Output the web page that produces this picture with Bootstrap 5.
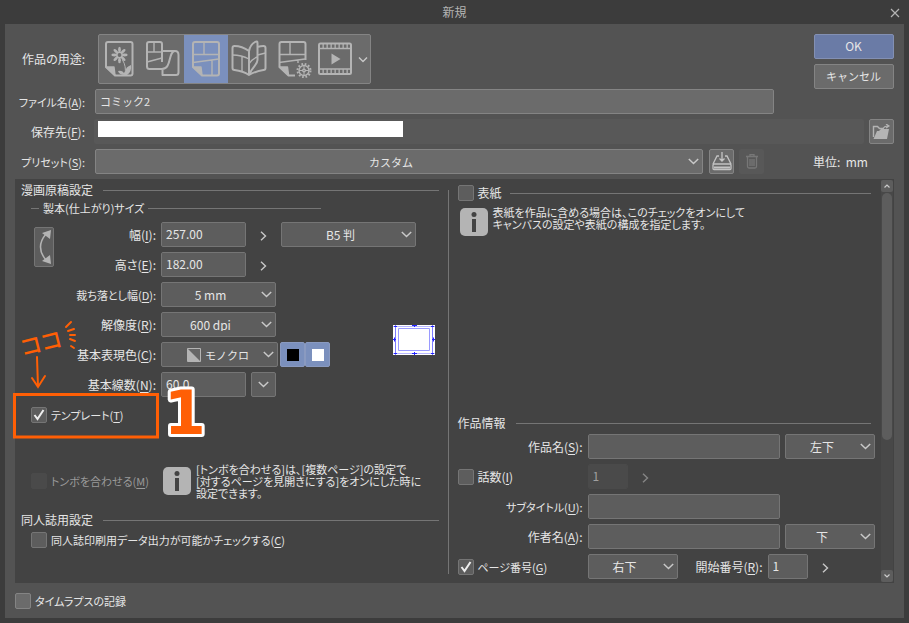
<!DOCTYPE html>
<html lang="ja">
<head>
<meta charset="utf-8">
<meta name="viewport" content="width=device-width, initial-scale=1">
<title>新規</title>
<link href="https://cdn.jsdelivr.net/npm/bootstrap@5.3.0/dist/css/bootstrap.min.css" rel="stylesheet">
<style>
body{background:#3c3c3c;color:#e6e6e6;font-family:"Noto Sans CJK JP",sans-serif;font-size:12px;line-height:12px;font-feature-settings:"palt";min-height:100vh}
u{text-underline-offset:2px}
.titlebar{height:24px;color:#b4b4b4}
.close-btn{width:24px;height:24px;right:2px;color:#c8c8c8}
.dialog{background:#535353;margin:0 5px 5px;padding:10px 10px 9px}
.plain{background:none;border:0;padding:0;color:inherit}
.gap5{gap:5px}.gap6{gap:6px}.gap10{gap:10px}.gap2{gap:2px}
.side{width:80px;margin-left:40px}
.lab{width:70px;white-space:nowrap;flex:none;display:flex;justify-content:flex-end}
.lab-m{width:135px}.lab-s{width:102px}.lab-r{width:125px}.lab-n{width:80px}
.ctl{height:25px;font-size:12px;line-height:12px;border-radius:2px;border:1px solid #757575;background-color:#5d5d5d;color:#e6e6e6;min-height:0;padding:0 5px 2px 4px}
.kana,.ctl.kana{font-size:11px}
.ctl:focus{background-color:#5d5d5d;color:#fff}
.ctl:disabled{background-color:#4a4a4a;border-color:#4a4a4a;color:#a0a0a0;opacity:1}
.lite .ctl{background-color:#6b6b6b;border-color:#848484}
select.ctl{padding:0 24px 0 8px;text-align-last:center;background-image:url("data:image/svg+xml,%3Csvg xmlns='http://www.w3.org/2000/svg' viewBox='0 0 11 7'%3E%3Cpath d='M.8 1l4.7 4.5L10.2 1' fill='none' stroke='%23c8c8c8' stroke-width='1.5'/%3E%3C/svg%3E");background-size:11px 7px;background-position:right 3px center;background-repeat:no-repeat}
select.mono{padding:0 20px 0 43px;text-align-last:left;background-image:url("data:image/svg+xml,%3Csvg xmlns='http://www.w3.org/2000/svg' viewBox='0 0 11 7'%3E%3Cpath d='M.8 1l4.7 4.5L10.2 1' fill='none' stroke='%23c8c8c8' stroke-width='1.5'/%3E%3C/svg%3E"),url("data:image/svg+xml,%3Csvg xmlns='http://www.w3.org/2000/svg' viewBox='0 0 14 14'%3E%3Cpath d='M.5.5h13v13H.5z' fill='%23666' stroke='%23b4b4b4'/%3E%3Cpath d='M1 1l12 12H1z' fill='%23b4b4b4'/%3E%3C/svg%3E");background-size:11px 7px,14px 14px;background-position:right 3px center,25px center}
.sq{width:25px;padding:0;flex:none;display:flex;align-items:center;justify-content:center}
.lite .ok{background:#6a7ba6;border-color:#8390b3}
.trash{height:25px;background:#585858;border-radius:2px;margin-left:-1px}
.tools{height:50px;background:#6b6b6b;border:1px solid #848484;border-radius:2px;margin-left:3px}
.tools svg{display:block;fill:none;stroke:#b4b4b4;stroke-width:1.4;stroke-linejoin:round}
.tools .on{background:#7b90bd}
.solid{fill:#b4b4b4}
.tools .thick{stroke-width:2}
.path-box{background:#585858;border-radius:2px;height:25px;padding:2px 4px}
.path-box input{width:305px;height:16px;background:#fff;border:0;display:block}
.unit{width:81px;margin-left:43px}
.sheet{background:#434343;padding:0 1px 0 6px;margin-top:5px}
.half{flex:1 1 0;min-width:0}
.split{width:1px;background:#757575;margin:11px 9px 9px}
.head{height:22px;gap:10px;white-space:nowrap}
.rule{height:1px;background:#757575;flex:1}
.rule-s{width:8px;height:1px;background:#757575}
.sub{height:14px;padding-left:10px;margin-bottom:7px;width:300px}
.rows{display:flex;flex-direction:column;gap:5px}
.w40{width:40px}.w85{width:85px}.w90{width:90px}.w115{width:115px}.w117{width:117px}.w135{width:135px}
.step{width:25px;height:25px;flex:none}
.step:disabled{opacity:.5}
.swap{width:20px;height:40px;margin:5px 0 0 13px}
.swatch{width:25px;height:25px;border:1px solid #8a9ac0;background:#7b90bd;border-radius:2px;padding:5px}
.swatch span{display:block;width:12px;height:12px;margin:auto}
.chk{appearance:none;width:16px;height:16px;border:1px solid #757575;border-radius:2px;background:#5d5d5d center/14px no-repeat;margin:0;flex:none}
.chk:checked{background-image:url("data:image/svg+xml,%3Csvg xmlns='http://www.w3.org/2000/svg' viewBox='0 0 14 14'%3E%3Cpath d='M2.5 7l3 4L11.5 2' fill='none' stroke='%23eee' stroke-width='2'/%3E%3C/svg%3E")}
.chk:disabled{background-color:#4a4a4a;border-color:#4a4a4a}
.lite .chk{background-color:#6b6b6b;border-color:#848484}
.line{display:flex;align-items:center;gap:4px;white-space:nowrap}
.tmpl{height:25px;padding-left:10px;margin-top:5px}
.tombo{height:36px;padding-left:10px;margin-top:36px;gap:5px}
.tombo .line{width:127px;flex:none;color:#9a9a9a}
.doujin{margin-top:10px}
.check-row{height:18px;padding-left:10px}
.cover{height:28px}
.tip{height:28px;margin-top:1px;padding-left:2px;gap:5px}
.info{margin-top:176px}
.memo{left:-8px;top:-87px;pointer-events:none;overflow:visible}
.scroll{width:12px;margin:1px 0 1px 6px;background:#484848}
.scroll button{width:12px;height:12px;background:#5d5d5d;border-radius:2px;line-height:0}
.thumb{width:10px;height:247px;background:#5d5d5d;border-radius:5px;margin:1px auto 0}
.foot{padding-top:10px}
</style>
<script src="https://cdn.jsdelivr.net/npm/bootstrap@5.3.0/dist/js/bootstrap.bundle.min.js"></script>
</head>
<body class="d-flex flex-column">
<header class="titlebar d-flex align-items-center justify-content-center position-relative">
  <span>新規</span>
  <button class="plain close-btn position-absolute" aria-label="閉じる"><svg width="10" height="10" viewBox="0 0 10 10" stroke="currentColor" stroke-width="1.2"><path d="M1 1l8 8M9 1L1 9"/></svg></button>
</header>
<main class="dialog flex-grow-1 d-flex flex-column">
  <section class="lite rows">
    <div class="d-flex">
      <div class="flex-grow-1 rows">
        <div class="d-flex align-items-center gap10">
          <span class="lab">作品の用途:</span>
          <div class="tools d-flex" role="group" aria-label="作品の用途">
            <button class="plain" aria-label="イラスト"><svg width="42" height="48" viewBox="0 0 42 48"><path class="thick" d="M9 7h22.500q2 0 2 2v29.500q0 2-2 2H16L7 32V9q0-2 2-2z"/><path class="solid" d="M7 32h8l1 8z"/><g fill="#b4b4b4" stroke="none"><g id="pt"><ellipse cx="20.500" cy="14.800" rx="1.400" ry="3"/><ellipse cx="20.500" cy="25.200" rx="1.400" ry="3"/></g><use href="#pt" transform="rotate(45 20.500 20)"/><use href="#pt" transform="rotate(90 20.500 20)"/><use href="#pt" transform="rotate(135 20.500 20)"/><path d="M26 40q-6 0-7-4 4-1 6 2l1.500-2q0-4 5.500-6 1 7-4 10z"/></g><circle cx="20.500" cy="20" r="2.600"/><path d="M23.500 25q4 6 2.500 15" stroke-width="1"/></svg></button>
            <button class="plain" aria-label="Webtoon"><svg width="43" height="48" viewBox="0 0 43 48"><path class="thick" d="M21 27V9q0-2-2-2H8Q6 7 6 9v22.500Q6 34 8.500 34H21c10 0 6-18 13-18q3.500 0 3.500 4v17.500q0 2.500-2.500 2.500H21.500V34M21 16h13"/><path d="M13 7v10M6 17h15M6 27l15-4"/></svg></button>
            <button class="plain on" aria-label="コミック" aria-pressed="true"><svg width="44" height="48" viewBox="0 0 44 48"><path class="thick" d="M11 7h22q2 0 2 2v29.500q0 2-2 2H18L9 32V9q0-2 2-2z"/><path class="solid" d="M9 32h8l1 8z"/><path d="M20 7v12M9 19.500h26M9 27.500l26-3.500M28 25V40"/></svg></button>
            <button class="plain" aria-label="同人誌入稿"><svg width="43" height="48" viewBox="0 0 43 48"><path class="thick" d="M21 16Q14 11 6.500 11q-2 0-2 2v20q0 2 2 2Q15 36 21 40 28 36 35.500 35q2 0 2-2V13q0-2-2-2-3 0-6 1M21 40V16q1-6 6-9 2.500-1.500 2.500 1v17c0 5-5 6-8.500 15"/><path d="M4.500 20q9 0 16.500 4M14 21.500V36M29.500 20l8-2M21 29q3-5 8-7"/></svg></button>
            <button class="plain" aria-label="すべての設定"><svg width="43" height="48" viewBox="0 0 43 48"><path class="thick" d="M34.500 25V9q0-2-2-2h-22q-2 0-2 2v23l9 8.500H24"/><path class="solid" d="M8.500 32h8l1 8z"/><path d="M19 7v12M8 19.500h26M8 27.500l26-3.500M27 25v3"/><circle cx="33" cy="35.500" r="5"/><circle cx="33" cy="35.500" r="6.500" stroke-width="2" stroke-dasharray="1.700 1.700"/><circle cx="33" cy="35.500" r="1.300"/><path stroke-width="1" d="M33 30.500v4M33 36.500v4M28 35.500h4M34 35.500h4"/></svg></button>
            <button class="plain" aria-label="アニメーション"><svg width="43" height="48" viewBox="0 0 43 48"><rect class="thick" x="5" y="8.500" width="32" height="30.500" rx="1.500"/><path d="M5 13.500h32M5 34h32"/><path stroke-width="4.500" stroke-dasharray="1.300 2.700" d="M8.500 11h27M8.500 36.500h27"/><path class="solid" stroke="none" d="M17.500 18.500l9 5.500-9 5.500z"/></svg></button>
            <button class="plain" aria-label="その他"><svg width="13" height="48" viewBox="0 0 13 48"><path d="M2 22.500l4 4 4-4" stroke="#c8c8c8"/></svg></button>
          </div>
        </div>
        <div class="d-flex align-items-center gap10">
          <label class="lab kana" for="fn">ファイル名(<u>A</u>):</label>
          <input id="fn" class="form-control ctl kana" value="コミック2">
        </div>
      </div>
      <div class="side rows flex-shrink-0">
        <button class="btn ctl ok w-100">OK</button>
        <button class="btn ctl kana w-100">キャンセル</button>
      </div>
    </div>
    <div class="d-flex align-items-center gap5">
      <label class="lab" for="dir">保存先(<u>F</u>):</label>
      <div class="path-box flex-grow-1 ms-1"><input id="dir" readonly></div>
      <button class="btn ctl sq" aria-label="フォルダーを開く"><svg width="19" height="16" viewBox="0 0 19 16"><path d="M1.500 13V2.500h4l2 2h4" fill="none" stroke="#b4b4b4" stroke-width="1.400"/><path d="M1.500 15L5 7h2l2-2h8l-2 10z" fill="#b4b4b4"/><path d="M11 5q1-3 5-3M14 0l3 2-3 2" fill="none" stroke="#b4b4b4" stroke-width="1.200"/></svg></button>
    </div>
    <div class="d-flex align-items-center gap6">
      <label class="lab kana" for="pre">プリセット(<u>S</u>):</label>
      <select id="pre" class="form-select ctl kana flex-grow-1 w-auto ms-1"><option>カスタム</option></select>
      <button class="btn ctl sq" aria-label="プリセットを保存"><svg width="20" height="19" viewBox="0 0 20 19" fill="none" stroke="#c4c4c4" stroke-width="1.300"><path d="M7 4H5L1 12M13 4h2l4 8M10 0v9M7.500 6.500L10 9l2.500-2.500"/><rect x="1" y="12" width="18" height="5.500" rx="1"/><path d="M2 15.500h16" stroke-width="2"/></svg></button>
      <button class="sq plain trash" aria-label="プリセットを削除"><svg width="12" height="15" viewBox="0 0 12 15" fill="none" stroke="#777" stroke-width="1.300"><path d="M0 2.500h12M4 2V.7h4V2M1.500 3v9.500q0 1.500 1.500 1.500h6q1.500 0 1.500-1.500V3M4 5v7M6 5v7M8 5v7"/></svg></button>
      <span class="unit">単位:&nbsp; mm</span>
    </div>
  </section>

  <section class="sheet d-flex flex-grow-1">
    <div class="half">
      <div class="head d-flex align-items-center">漫画原稿設定<span class="rule"></span></div>
      <div class="sub d-flex align-items-center gap-1"><span class="rule-s"></span><span class="kana">製本(仕上がり)サイズ</span><span class="rule"></span></div>
      <div class="rows">
        <div class="d-flex">
          <button class="btn ctl swap p-0" aria-label="幅と高さを入れ替え"><svg width="18" height="38" viewBox="0 0 18 38"><path d="M11 6Q0 19 11 32" fill="none" stroke="#b4b4b4" stroke-width="1.500"/><path d="M7 5l9-3-1 9zM7 33l9 3-1-9z" fill="#b4b4b4"/></svg></button>
          <div class="rows">
            <div class="d-flex align-items-center gap5">
              <label class="lab lab-s" for="wd">幅(<u>I</u>):</label><input id="wd" class="form-control ctl w85" value="257.00">
              <button class="plain step" aria-label="幅を調整"><svg width="7" height="10" viewBox="0 0 7 10"><path d="M1 .8L5.500 5 1 9.200" fill="none" stroke="#c8c8c8" stroke-width="1.400"/></svg></button>
              <select class="form-select ctl w135" aria-label="用紙サイズ"><option>B5 判</option></select>
            </div>
            <div class="d-flex align-items-center gap5">
              <label class="lab lab-s" for="ht">高さ(<u>E</u>):</label><input id="ht" class="form-control ctl w85" value="182.00">
              <button class="plain step" aria-label="高さを調整"><svg width="7" height="10" viewBox="0 0 7 10"><path d="M1 .8L5.500 5 1 9.200" fill="none" stroke="#c8c8c8" stroke-width="1.400"/></svg></button>
            </div>
          </div>
        </div>
        <div class="d-flex align-items-center justify-content-between pe-1">
          <div class="rows">
            <div class="d-flex align-items-center gap5"><label class="lab lab-m kana" for="bl">裁ち落とし幅(<u>D</u>):</label><select id="bl" class="form-select ctl w115"><option>5 mm</option></select></div>
            <div class="d-flex align-items-center gap5"><label class="lab lab-m" for="rs">解像度(<u>R</u>):</label><select id="rs" class="form-select ctl w115"><option>600 dpi</option></select></div>
            <div class="d-flex align-items-center gap5"><label class="lab lab-m" for="cl">基本表現色(<u>C</u>):</label>
              <div class="d-flex gap2"><select id="cl" class="form-select ctl kana mono w117"><option>モノクロ</option></select>
              <div class="d-flex"><button class="swatch" aria-label="黒"><span class="bg-black"></span></button><button class="swatch" aria-label="白"><span class="bg-white"></span></button></div></div></div>
            <div class="d-flex align-items-center gap5"><label class="lab lab-m" for="ln">基本線数(<u>N</u>):</label><input id="ln" class="form-control ctl w85" value="60.0"><button class="btn ctl sq" aria-label="線数を選択"><svg width="11" height="7" viewBox="0 0 11 7"><path d="M.8 1l4.700 4.500L10.200 1" fill="none" stroke="#c8c8c8" stroke-width="1.500"/></svg></button></div>
          </div>
          <svg width="42" height="30" viewBox="0 0 42 30" role="img" aria-label="用紙プレビュー"><path fill="#fff" d="M0 0h42v30H0z"/><g fill="none" stroke="#2424ff"><path stroke="#9a9aff" d="M5.500 3.500h31v22h-31z"/><path stroke="#b8b8ff" d="M0 1.500h42M0 28.500h42"/><path d="M2.500 0v30M39.500 0v30" stroke="#7c7cff"/><path d="M19 .5h5M19 28.500h5M21.500 0v2M21.500 27v3M0 14.500h3M39 14.500h3M1.500 12.500v4M40.500 12.500v4M1 1.500h3M38 1.500h3M1 28.500h3M38 28.500h3"/></g></svg>
        </div>
      </div>
      <div class="tmpl line position-relative">
        <input type="checkbox" class="chk" id="tp" checked><label for="tp" class="kana">テンプレート(<u>T</u>)</label>
        <svg class="memo position-absolute" width="200" height="150" viewBox="0 0 200 150" fill="none" stroke="#ff5f05" stroke-width="2">
          <path stroke-width="3" d="M1.500 79.500h143v42.500H1.500z"/>
          <path stroke-linecap="round" d="M24 42l1 30M19 63l6 9 7-11M53 12l5-5M55 16l6-2M57 20h5M57 24l5 2M58 31l3 2"/>
          <text x="10" y="41" font-size="22" transform="rotate(-14 10 41)" font-weight="500" fill="#ff5f05" stroke="none">ココ</text>
          <text x="151" y="119" font-family="DejaVu Sans, sans-serif" font-weight="700" font-size="60" fill="#ff5f05" stroke="#fff" stroke-width="6" stroke-linejoin="round" paint-order="stroke">1</text>
        </svg>
      </div>
      <div class="tombo d-flex align-items-center">
        <div class="line"><input type="checkbox" class="chk" id="tb" disabled><label for="tb" class="kana">トンボを合わせる(<u>M</u>)</label></div>
        <svg class="flex-shrink-0" width="28" height="28" viewBox="0 0 28 28"><rect width="28" height="28" rx="5" fill="#b4b4b4"/><circle cx="14" cy="6.500" r="2.500" fill="#434343"/><path d="M12 11h4v13h-4z" fill="#434343"/></svg>
        <span class="text-nowrap kana">[トンボを合わせる]は、[複数ページ]の設定で<br>[対するページを見開きにする]をオンにした時に<br>設定できます。</span>
      </div>
      <div class="head doujin d-flex align-items-center">同人誌用設定<span class="rule"></span></div>
      <div class="line check-row"><input type="checkbox" class="chk" id="dc"><label for="dc" class="kana">同人誌印刷用データ出力が可能かチェックする(<u>C</u>)</label></div>
    </div>
    <div class="split"></div>
    <div class="half">
      <div class="line cover"><input type="checkbox" class="chk" id="cv"><label for="cv">表紙</label><span class="rule ms-1 me-1"></span></div>
      <div class="d-flex align-items-center tip">
        <svg class="flex-shrink-0" width="28" height="28" viewBox="0 0 28 28"><rect width="28" height="28" rx="5" fill="#b4b4b4"/><circle cx="14" cy="6.500" r="2.500" fill="#434343"/><path d="M12 11h4v13h-4z" fill="#434343"/></svg>
        <span class="text-nowrap kana pb-2">表紙を作品に含める場合は、このチェックをオンにして<br>キャンバスの設定や表紙の構成を指定します。</span>
      </div>
      <div class="head info d-flex align-items-center pe-1">作品情報<span class="rule"></span></div>
      <div class="rows">
        <div class="d-flex align-items-center gap5"><label class="lab lab-r" for="wn">作品名(<u>S</u>):</label><input id="wn" class="form-control ctl half"><select class="form-select ctl w90" aria-label="作品名の位置"><option>左下</option></select></div>
        <div class="d-flex align-items-center gap5"><div class="line lab-r"><input type="checkbox" class="chk" id="ep"><label for="ep">話数(<u>I</u>)</label></div><input class="form-control ctl w40" aria-label="話数" value="1" disabled><button class="plain step" disabled aria-label="話数を調整"><svg width="7" height="10" viewBox="0 0 7 10"><path d="M1 .8L5.500 5 1 9.200" fill="none" stroke="#c8c8c8" stroke-width="1.400"/></svg></button></div>
        <div class="d-flex align-items-center gap5"><label class="lab lab-r kana" for="st">サブタイトル(<u>U</u>):</label><input id="st" class="form-control ctl half"><span class="w90"></span></div>
        <div class="d-flex align-items-center gap5"><label class="lab lab-r" for="au">作者名(<u>A</u>):</label><input id="au" class="form-control ctl half"><select class="form-select ctl w90" aria-label="作者名の位置"><option>下</option></select></div>
        <div class="d-flex align-items-center gap5"><div class="line lab-r"><input type="checkbox" class="chk" id="pg" checked><label for="pg" class="kana">ページ番号(<u>G</u>)</label></div><select class="form-select ctl w90" aria-label="ページ番号の位置"><option>右下</option></select><label class="lab lab-n" for="sn">開始番号(<u>R</u>):</label><input id="sn" class="form-control ctl w40" value="1"><button class="plain step" aria-label="開始番号を調整"><svg width="7" height="10" viewBox="0 0 7 10"><path d="M1 .8L5.500 5 1 9.200" fill="none" stroke="#c8c8c8" stroke-width="1.400"/></svg></button></div>
      </div>
    </div>
    <div class="scroll d-flex flex-column">
      <button class="plain" aria-label="上へ"><svg width="6" height="4" viewBox="0 0 6 4"><path d="M.5 3.500L3 1l2.500 2.500" fill="none" stroke="#ccc" stroke-width="1.200"/></svg></button>
      <div class="thumb"></div>
      <button class="plain mt-auto" aria-label="下へ"><svg width="6" height="4" viewBox="0 0 6 4"><path d="M.5.500L3 3 5.500.5" fill="none" stroke="#ccc" stroke-width="1.200"/></svg></button>
    </div>
  </section>
  <footer class="foot lite line"><input type="checkbox" class="chk" id="tl"><label for="tl" class="kana">タイムラプスの記録</label></footer>
</main>
</body>
</html>
